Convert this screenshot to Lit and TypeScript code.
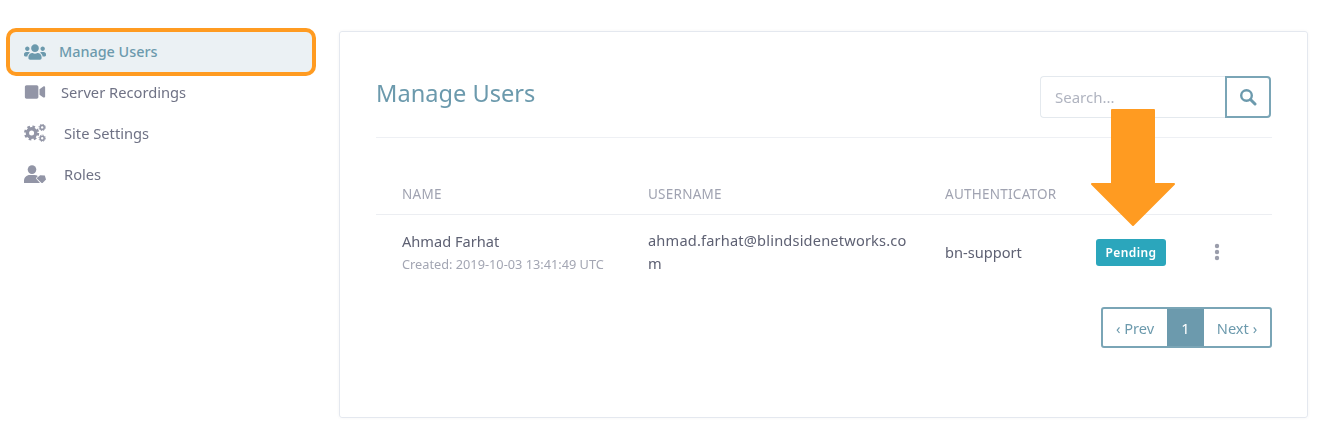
import { LitElement, html, css } from "lit";
import { customElement } from "lit/decorators.js";

const usersIcon = html`<svg class="ic" width="22" height="18" viewBox="0 0 640 512"><path fill="currentColor" d="M96 224c35.3 0 64-28.7 64-64s-28.7-64-64-64-64 28.7-64 64 28.7 64 64 64zm448 0c35.3 0 64-28.7 64-64s-28.7-64-64-64-64 28.7-64 64 28.7 64 64 64zm32 32h-64c-17.6 0-33.5 7.1-45.1 18.6 40.3 22.1 68.9 62 75.1 109.4h66c17.7 0 32-14.3 32-32v-32c0-35.3-28.7-64-64-64zm-256 0c61.9 0 112-50.1 112-112S381.9 32 320 32 208 82.1 208 144s50.1 112 112 112zm76.8 32h-8.3c-20.8 10-43.9 16-68.5 16s-47.6-6-68.5-16h-8.3C179.6 288 128 339.6 128 403.2V432c0 26.5 21.5 48 48 48h288c26.5 0 48-21.5 48-48v-28.8c0-63.6-51.6-115.2-115.2-115.2zm-223.7-13.4C161.5 263.1 145.6 256 128 256H64c-35.3 0-64 28.7-64 64v32c0 17.7 14.3 32 32 32h65.9c6.3-47.4 34.9-87.3 75.2-109.4z"/></svg>`;
const videoIcon = html`<svg class="ic" width="22" height="18" viewBox="-16 0 608 512"><path fill="currentColor" d="M336.2 64H47.8C21.4 64 0 85.4 0 111.8v288.4C0 426.6 21.4 448 47.8 448h288.4c26.4 0 47.8-21.4 47.8-47.8V111.8c0-26.4-21.4-47.8-47.8-47.8zm189.4 37.7L416 177.3v157.4l109.6 75.5c21.2 14.6 50.4-.3 50.4-25.8V127.5c0-25.4-29.1-40.4-50.4-25.8z"/></svg>`;
const cogsIcon = html`<svg class="ic" width="22" height="18" viewBox="0 0 22 18"><g fill="none" stroke="currentColor">
  <circle cx="7.6" cy="9" r="4.2" stroke-width="3.4"/>
  <circle cx="7.6" cy="9" r="6.4" stroke-width="2.4" stroke-dasharray="2.6 2.43"/>
  <circle cx="18.2" cy="3.4" r="2" stroke-width="1.6"/>
  <circle cx="18.2" cy="3.4" r="3.2" stroke-width="1" stroke-dasharray="1.3 1.2"/>
  <circle cx="18.2" cy="14.2" r="2" stroke-width="1.6"/>
  <circle cx="18.2" cy="14.2" r="3.2" stroke-width="1" stroke-dasharray="1.3 1.2"/>
</g></svg>`;
const rolesIcon = html`<svg class="ic" width="22" height="18" viewBox="0 0 22 18"><g fill="currentColor">
  <circle cx="8" cy="4.6" r="4.3"/>
  <path d="M0 18v-2.2C0 12.6 2.6 10 5.8 10h4.6c1.3 0 2.500.4 3.400 1.100L12 13.500l4 4.500H1.500z"/>
  <path d="M12.500 13.200l3.600-3 4.700.4 1.200 4-3.900 3.900z" stroke="#fff" stroke-width="1" paint-order="stroke"/>
</g></svg>`;

@customElement("app-root")
export class AppRoot extends LitElement {
  static styles = css`
    :host {
      display: block;
      position: relative;
      width: 1322px;
      height: 435px;
      overflow: hidden;
      background: #fff;
      font-family: "Noto Sans", "Open Sans", sans-serif;
      font-size: 14.6px;
      color: #5e6173;
    }
    * { box-sizing: border-box; }
    .page { display: flex; align-items: flex-start; padding: 31px 14px 0 10px; filter: blur(0.35px); }
    .side { width: 302px; margin-right: 27px; padding-top: 0.5px; flex: none; }
    .item {
      display: flex; align-items: center; height: 40.6px; padding-left: 14px;
      color: #6f7285; font-size: 14.7px;
    }
    .item .ic { color: #9295a6; flex: none; }
    .item.g13 span { margin-left: 13px; }
    .item.g15 span { margin-left: 15px; }
    .item.g18 span { margin-left: 18px; }
    .item.active {
      background: #ebf1f4; color: #6c9aad; border-radius: 6px;
      outline: 4px solid #ff9b21; font-weight: 500; font-size: 14.4px;
    }
    .item.active .ic { color: #6c9aad; }
    .card {
      flex: 1; height: 387px; border: 1px solid #e4e8ef; border-radius: 3px;
      padding: 44px 35px 0 36px;
      box-shadow: 0 0 3px rgba(60, 70, 90, 0.06);
    }
    .head { display: flex; justify-content: space-between; align-items: flex-start;
      padding-bottom: 19px; border-bottom: 1px solid #eef0f4; }
    h1 { margin: -1px 0 0; font-size: 23.6px; line-height: 36px; font-weight: 400; color: #6c9aad; }
    .search { display: flex; width: 231px; height: 42px; margin-right: 1px; }
    .search input {
      width: 185px; height: 42px; border: 1px solid #e4e9ee; border-right: 0;
      border-radius: 4px 0 0 4px; padding: 0 14px; font: inherit; font-size: 15px; outline: none; background: #fff;
    }
    .search input::placeholder { color: #b0b4c0; opacity: 1; }
    .search button {
      width: 46px; height: 42px; padding: 0; background: #fff; border: 2px solid #7aa5b6;
      border-radius: 0 4px 4px 0; color: #6c9aad; display: flex; align-items: center; justify-content: center;
    }
    .grid { display: grid; grid-template-columns: 246px 297px 151px 121px 81px; margin-top: 36px; }
    .grid > div { padding-left: 26px; }
    .th {
      height: 41px; line-height: 40px; font-size: 13.5px; color: #a0a3b1;
      border-bottom: 1px solid #eceef2; letter-spacing: 0.25px;
    }
    .td { padding-top: 14px; padding-bottom: 14px; display: flex; flex-direction: column; justify-content: center; line-height: 23px; }
    .name { line-height: 24px; color: #5e6173; }
    .created { font-size: 12.75px; line-height: 22px; color: #a3a6b3; }
    .user { word-break: break-all; padding-right: 10px; letter-spacing: 0.18px; }
    .badge {
      width: 70px; height: 27px; background: #2ba6bc; border-radius: 3px; color: #fff;
      font-size: 12px; font-weight: 600; letter-spacing: 0.4px;
      display: flex; align-items: center; justify-content: center;
    }
    .kebab { color: #9a9dab; display: block; margin-left: -4px; }
    .pager-row { display: flex; justify-content: flex-end; margin-top: 18px; }
    .pager { display: flex; height: 41px; border: 2px solid #7aa5b6; border-radius: 3px; color: #6c9aad; }
    .pager div { display: flex; align-items: center; justify-content: center; }
    .prev { width: 64px; }
    .cur { width: 37px; background: #6c9aad; color: #fff; }
    .next { width: 66px; }
    .arrow { position: absolute; left: 1088px; top: 106px; }
  `;

  render() {
    return html`
      <div class="page">
        <nav class="side">
          <div class="item active g13">${usersIcon}<span>Manage Users</span></div>
          <div class="item g15">${videoIcon}<span>Server Recordings</span></div>
          <div class="item g18">${cogsIcon}<span>Site Settings</span></div>
          <div class="item g18">${rolesIcon}<span>Roles</span></div>
        </nav>
        <main class="card">
          <div class="head">
            <h1>Manage Users</h1>
            <div class="search">
              <input placeholder="Search..." />
              <button aria-label="Search">
                <svg width="18" height="18" viewBox="0 0 18 18" fill="none" stroke="currentColor">
                  <circle cx="7.500" cy="7.500" r="5.300" stroke-width="2.400"/>
                  <path d="M11.500 11.500L16 16" stroke-width="3" stroke-linecap="round"/>
                </svg>
              </button>
            </div>
          </div>
          <div class="grid">
            <div class="th">NAME</div>
            <div class="th">USERNAME</div>
            <div class="th">AUTHENTICATOR</div>
            <div class="th"></div>
            <div class="th"></div>
            <div class="td"><span class="name">Ahmad Farhat</span><span class="created">Created: 2019-10-03 13:41:49 UTC</span></div>
            <div class="td user">ahmad.farhat@blindsidenetworks.com</div>
            <div class="td">bn-support</div>
            <div class="td"><span class="badge">Pending</span></div>
            <div class="td">
              <svg class="kebab" width="8" height="18" viewBox="0 0 8 18" fill="currentColor">
                <circle cx="4" cy="3" r="2.200"/><circle cx="4" cy="9" r="2.200"/><circle cx="4" cy="15" r="2.200"/>
              </svg>
            </div>
          </div>
          <div class="pager-row">
            <div class="pager">
              <div class="prev">‹ Prev</div>
              <div class="cur">1</div>
              <div class="next">Next ›</div>
            </div>
          </div>
        </main>
      </div>
      <svg class="arrow" width="90" height="124" viewBox="0 0 90 124">
        <path d="M24 4H66V78H86L45 119L4 78H24Z" fill="#ff9b21" stroke="#ff9b21" stroke-width="2" stroke-linejoin="round"/>
      </svg>
    `;
  }
}
